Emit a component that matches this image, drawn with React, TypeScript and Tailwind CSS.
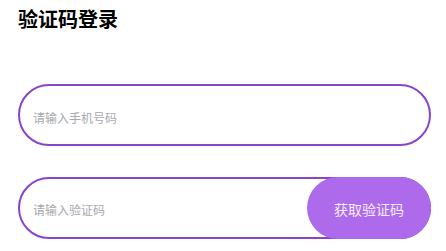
import React from 'react';

const App: React.FC = () => {
  return (
    <div
      className="w-[446px] h-[251px] bg-white px-[18px] pt-[5px] overflow-hidden"
      style={{ fontFamily: '"Noto Sans CJK SC", "Noto Sans", sans-serif' }}
    >
      {/* Title */}
      <h1 className="text-[20px] leading-[28px] font-bold text-black">验证码登录</h1>

      {/* Phone input */}
      <div className="mt-[51px] h-[62px] w-[413px] rounded-full border-2 border-[#8a44cc] flex items-center pl-[13px] pt-[5px]">
        <input
          className="flex-1 bg-transparent outline-none text-[12px] text-gray-800 placeholder:text-[#a8a8b0]"
          placeholder="请输入手机号码"
        />
      </div>

      {/* Code input + button */}
      <div className="mt-[31px] h-[62px] w-[413px] relative rounded-full border-2 border-[#8a44cc] flex items-center pl-[13px] pt-[3px]">
        <input
          className="flex-1 bg-transparent outline-none text-[12px] text-gray-800 placeholder:text-[#a8a8b0]"
          placeholder="请输入验证码"
        />
        <button className="absolute -right-[2px] -top-[2px] h-[62px] w-[124px] rounded-full bg-[#ad6bec] text-[14px] text-[#f5ecfd] flex items-center justify-center pt-[2px]">
          获取验证码
        </button>
      </div>
    </div>
  );
};

export default App;
